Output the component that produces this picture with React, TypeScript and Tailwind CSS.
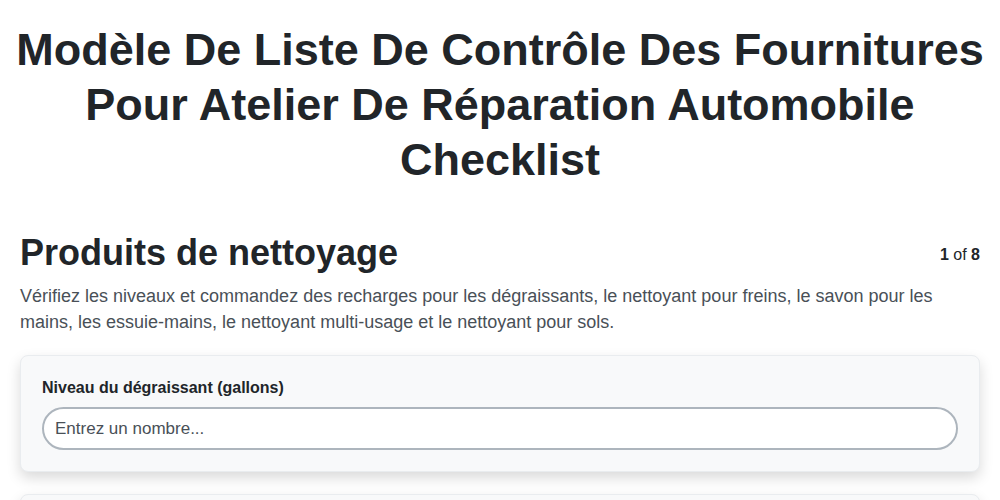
export default function App() {
  return (
    <div className="min-h-screen bg-white px-5 pt-[22px] text-[#212529] font-['Liberation_Sans',Arial,sans-serif]">
      <h1 className="-mx-2 text-center text-[45px] font-bold leading-[55px]">
        Modèle De Liste De Contrôle Des Fournitures Pour Atelier De Réparation Automobile Checklist
      </h1>

      <div className="mt-[44px] flex items-start justify-between">
        <h2 className="text-[36px] font-bold leading-[1.2]">Produits de nettoyage</h2>
        <div className="pt-[12px] text-[16px]">
          <span className="font-bold">1</span> of <span className="font-bold">8</span>
        </div>
      </div>
      <p className="mt-[9px] text-[18px] leading-[26px] text-[#495057]">
        Vérifiez les niveaux et commandez des recharges pour les dégraissants, le nettoyant pour freins, le savon pour les mains, les essuie-mains, le nettoyant multi-usage et le nettoyant pour sols.
      </p>

      <div className="mt-5 flex flex-col gap-[22px]">
        <div className="rounded-lg border border-[#e9ecef] bg-[#f8f9fa] p-[21px] shadow-[0_6px_14px_rgba(0,0,0,0.15)]">
          <label className="mb-2 block text-[16px] font-bold leading-[22px]">Niveau du dégraissant (gallons)</label>
          <input
            type="text"
            placeholder="Entrez un nombre..."
            className="h-[43px] w-full rounded-full border-2 border-[#adb5bd] bg-white px-[11px] text-[17px] text-[#212529] placeholder:text-[#495057] outline-none"
          />
        </div>
        <div className="h-[100px] rounded-lg border border-[#e9ecef] bg-[#f8f9fa] p-[21px] shadow-[0_6px_14px_rgba(0,0,0,0.15)]"></div>
      </div>
    </div>
  );
}
